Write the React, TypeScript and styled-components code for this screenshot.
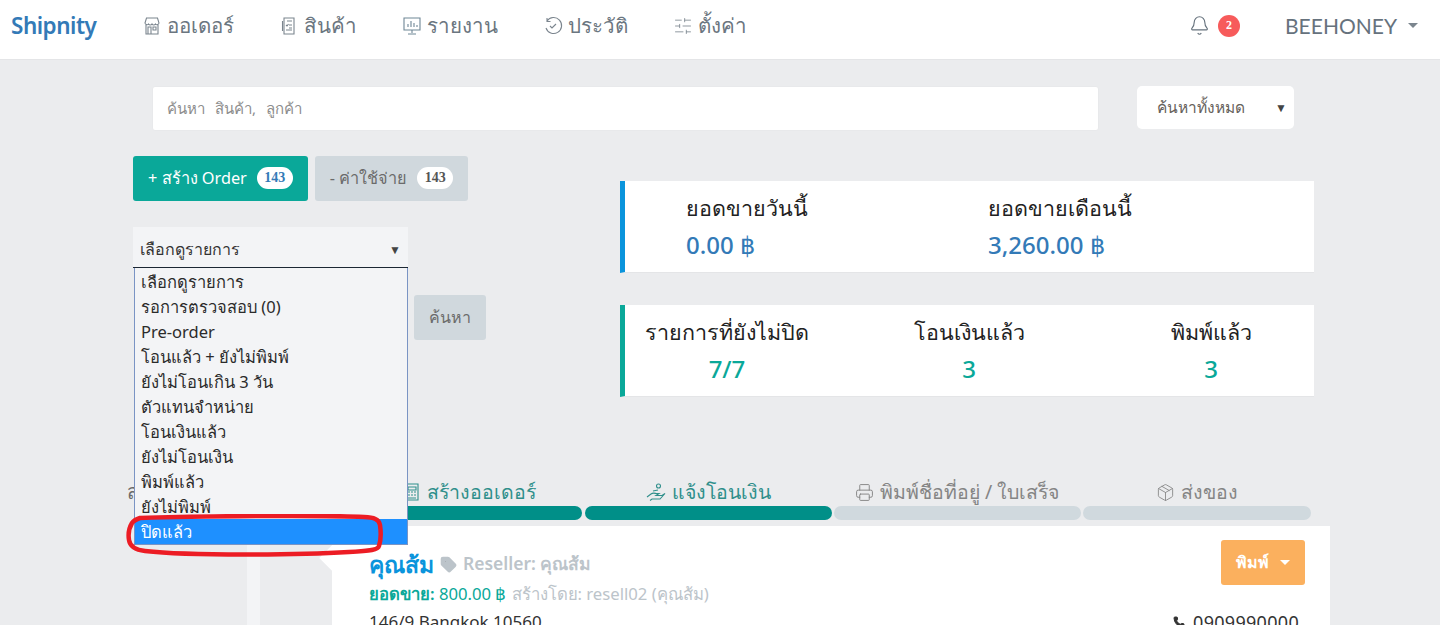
import styled, { createGlobalStyle } from "styled-components";
import { Bell, Package, Phone, Printer, SlidersHorizontal, Tag } from "lucide-react";

const GlobalStyle = createGlobalStyle`
  html, body {
    margin: 0;
    padding: 0;
    background: #ebecee;
    overflow: hidden;
  }
  * { box-sizing: border-box; }
  body { font-family: "Noto Sans", "Liberation Sans", sans-serif; }
`;

const Page = styled.div`
  width: 1440px;
  height: 625px;
  overflow: hidden;
  display: flex;
  flex-direction: column;
`;

const Navbar = styled.nav`
  height: 60px;
  flex: none;
  background: #fff;
  border-bottom: 1px solid #e4e5e7;
  display: flex;
  align-items: center;
  padding: 0 22px 8px 11px;
`;

const Brand = styled.div`
  font-size: 22.5px;
  font-weight: 600;
  letter-spacing: -0.5px;
  color: #337ab7;
  width: 131px;
`;

const NavMenu = styled.div`
  display: flex;
  gap: 45px;
  flex: 1;
`;

const NavItem = styled.div`
  display: flex;
  align-items: center;
  gap: 5px;
  font-size: 20.5px;
  color: #6b7680;
`;

const NavRight = styled.div`
  display: flex;
  align-items: center;
  color: #66727d;
`;

const Badge = styled.span`
  width: 22px;
  height: 22px;
  border-radius: 50%;
  background: #f75b5b;
  color: #fff;
  font: bold 12px "Liberation Serif", serif;
  display: flex;
  align-items: center;
  justify-content: center;
  margin: 0 45px 0 8px;
`;

const UserName = styled.span`
  font-size: 21px;
  font-family: "Lato", sans-serif;
`;

const Caret = styled.span<{ $color?: string }>`
  width: 0;
  height: 0;
  border-left: 5px solid transparent;
  border-right: 5px solid transparent;
  border-top: 5px solid ${(p) => p.$color ?? "#7b858e"};
  margin-left: 11px;
`;

const Main = styled.main`
  flex: 1;
  padding-top: 26px;
  display: flex;
  flex-direction: column;
`;

const SearchRow = styled.div`
  display: flex;
  gap: 38px;
  padding-left: 152px;
`;

const SearchBox = styled.div`
  width: 947px;
  height: 45px;
  background: #fff;
  border-radius: 3px;
  border: 1px solid #e8e9eb;
  padding: 0 14px;
  display: flex;
  align-items: center;
  font-size: 15px;
  color: #8d8d8d;
  word-spacing: 6px;
`;

const ScopeSelect = styled.div`
  width: 157px;
  height: 43px;
  background: #fff;
  border-radius: 5px;
  display: flex;
  align-items: center;
  justify-content: space-between;
  padding: 0 7px 0 20px;
  font-size: 15.5px;
  color: #66615b;
`;

const SmallArrow = styled.span`
  font-size: 12px;
  color: #444;
`;

const Columns = styled.div`
  display: grid;
  grid-template-columns: 487px 694px;
  padding: 25px 0 0 133px;
`;

const LeftColumn = styled.div`
  position: relative;
`;

const ActionRow = styled.div`
  display: flex;
  gap: 7px;
`;

const ActionButton = styled.div<{ $primary?: boolean }>`
  height: 45px;
  border-radius: 3px;
  padding: 0 15px 2px;
  display: flex;
  align-items: center;
  gap: 10px;
  font-size: 16.3px;
  background: ${(p) => (p.$primary ? "#0aa899" : "#d0d8dd")};
  color: ${(p) => (p.$primary ? "#fff" : "#6b6b6b")};
`;

const Count = styled.span<{ $primary?: boolean }>`
  width: 36px;
  height: 22px;
  background: #fff;
  border-radius: 11px;
  display: flex;
  align-items: center;
  justify-content: center;
  font: bold 14px "Liberation Serif", serif;
  color: ${(p) => (p.$primary ? "#337ab7" : "#555")};
`;

const FilterClosed = styled.div`
  width: 275px;
  height: 41px;
  margin-top: 26px;
  background: #f3f4f6;
  border-bottom: 1px solid #1c2733;
  display: flex;
  align-items: center;
  justify-content: space-between;
  padding: 5px 7px 0 7px;
  font-size: 16px;
  color: #333;
`;

const FilterList = styled.ul`
  position: absolute;
  z-index: 3;
  top: 112px;
  left: 1px;
  width: 274px;
  margin: 0;
  padding: 1px 0 0;
  list-style: none;
  background: #f3f4f6;
  border: 1px solid #7a94c4;
  border-top: none;
`;

const FilterOption = styled.li<{ $selected?: boolean }>`
  height: 25px;
  line-height: 25px;
  padding-left: 6px;
  font-size: 16.5px;
  color: ${(p) => (p.$selected ? "#fff" : "#2b2b2b")};
  background: ${(p) => (p.$selected ? "#1e90ff" : "transparent")};
`;

const SearchButton = styled.div`
  position: absolute;
  left: 281px;
  top: 139px;
  width: 72px;
  height: 45px;
  border-radius: 3px;
  background: #d0d8dd;
  color: #6b6b6b;
  font-size: 16px;
  display: flex;
  align-items: center;
  justify-content: center;
`;

const Highlight = styled.svg`
  position: absolute;
  z-index: 4;
  left: -7px;
  top: 358px;
`;

const RightColumn = styled.div`
  display: flex;
  flex-direction: column;
  gap: 32px;
  padding-top: 25px;
`;

const StatCard = styled.section<{ $accent: string; $columns: string; $inset?: number }>`
  height: 92px;
  background: #fff;
  border-left: 5px solid ${(p) => p.$accent};
  border-bottom: 1px solid #e4e5e7;
  padding-left: ${(p) => p.$inset ?? 0}px;
  display: grid;
  grid-template-columns: ${(p) => p.$columns};
  align-items: center;
`;

const Stat = styled.div<{ $center?: boolean }>`
  display: flex;
  flex-direction: column;
  gap: 11px;
  align-items: ${(p) => (p.$center ? "center" : "flex-start")};
`;

const StatLabel = styled.div`
  font-size: 21.5px;
  font-weight: 500;
  color: #222;
  line-height: 26px;
  white-space: nowrap;
`;

const StatValue = styled.div<{ $color: string }>`
  font-size: 24px;
  font-weight: 500;
  line-height: 26px;
  color: ${(p) => p.$color};
`;

const Steps = styled.div`
  position: relative;
  display: grid;
  grid-template-columns: 248px 247px 246.5px 228px;
  column-gap: 2.5px;
  margin: 75px 0 0 334px;
`;

const HiddenHeading = styled.div`
  position: absolute;
  left: -207px;
  top: 4px;
  font-size: 20px;
  color: #6b6b6b;
`;

const StepLabel = styled.div<{ $done?: boolean; $shift?: number }>`
  height: 34px;
  padding: 6px 0 0 ${(p) => p.$shift ?? 0}px;
  display: flex;
  align-items: center;
  justify-content: center;
  gap: 6px;
  font-size: 19.5px;
  color: ${(p) => (p.$done ? "#2f8f8b" : "#858585")};
`;

const StepBar = styled.div<{ $done?: boolean }>`
  height: 14px;
  border-radius: 7px;
  background: ${(p) => (p.$done ? "#008f88" : "#d0d9de")};
`;

const OrderArea = styled.div`
  display: flex;
  flex: 1;
  margin-top: 6px;
  padding-left: 247px;
`;

const SideStripe = styled.div`
  width: 13px;
  background: #f3f4f6;
  margin-top: 19px;
`;

const SideGap = styled.div`
  width: 72px;
`;

const OrderCard = styled.article`
  position: relative;
  width: 998px;
  background: #fff;
  padding: 14px 25px 0 37px;

  &::before {
    content: "";
    position: absolute;
    left: -9px;
    top: 23px;
    width: 18px;
    height: 18px;
    background: #fff;
    transform: rotate(45deg);
  }
`;

const OrderHeader = styled.div`
  display: flex;
  justify-content: space-between;
  align-items: flex-start;
`;

const CustomerLine = styled.div`
  display: flex;
  align-items: center;
  gap: 6px;
  padding-top: 9px;
`;

const CustomerName = styled.span`
  font-size: 23px;
  font-weight: 600;
  line-height: 30px;
  color: #0a94dc;
`;

const ResellerName = styled.span`
  font-size: 17.5px;
  font-weight: 600;
  color: #bcc4ca;
`;

const SaleLine = styled.div`
  font-size: 16.7px;
  color: #0aa899;
  white-space: nowrap;
  margin-top: 2px;
`;

const SaleLabel = styled.b`
  font-weight: 600;
`;

const CreatedBy = styled.span`
  color: #bcc4ca;
  margin-left: 5px;
`;

const PrintButton = styled.div`
  width: 84px;
  height: 45px;
  border-radius: 3px;
  background: #fbb05e;
  color: #fff;
  font-size: 16px;
  font-weight: 600;
  display: flex;
  align-items: center;
  justify-content: center;
`;

const AddressRow = styled.div`
  display: flex;
  justify-content: space-between;
  font-size: 17px;
  line-height: 24px;
  color: #333;
  margin-top: 3px;
  padding-right: 6px;
`;

const PhoneText = styled.span`
  display: flex;
  align-items: center;
  gap: 8px;
  font-size: 18px;
  letter-spacing: 0.3px;
`;

const navItems = ["ออเดอร์", "สินค้า", "รายงาน", "ประวัติ", "ตั้งค่า"];

const NavIcon = ({ index }: { index: number }) => (
  <svg width="20" height="20" viewBox="0 0 20 20" fill="none" stroke="#7b858e" strokeWidth="1.1">
    {index === 0 && (
      <path d="M3 7l1.500-5h11L17 7a2 2 0 0 1-3.500 1 2 2 0 0 1-3.500 0 2 2 0 0 1-3.500 0A2 2 0 0 1 3 7zM4 9v9h12V9M6 11h3v7H6zM11 11h3v3h-3z" />
    )}
    {index === 1 && (
      <path d="M5 2h10v16H5zM3.500 5v10M8 5h5M10 9h3M10 12h3M7 9l1 1 1.500-2M7 14h6" />
    )}
    {index === 2 && (
      <path d="M2 2h16v12H2zM10 14v3M6 18h8M6 11V8M9 11V5M12 11V7M15 11V9" stroke="#6f8796" />
    )}
    {index === 3 && <path d="M4 5a8 8 0 1 1-1 7M4 2v3.500h3.500M7 10l2 2 4-4" />}
  </svg>
);

const filterOptions = [
  "เลือกดูรายการ",
  "รอการตรวจสอบ (0)",
  "Pre-order",
  "โอนแล้ว + ยังไม่พิมพ์",
  "ยังไม่โอนเกิน 3 วัน",
  "ตัวแทนจำหน่าย",
  "โอนเงินแล้ว",
  "ยังไม่โอนเงิน",
  "พิมพ์แล้ว",
  "ยังไม่พิมพ์",
  "ปิดแล้ว",
];

const ReceiptIcon = () => (
  <svg width="18" height="20" viewBox="0 0 18 20" fill="none" stroke="#2f8f8b" strokeWidth="1.1">
    <path d="M3 2h12v16H3zM5 5h8v3H5zM5 10h2M8 10h2M11 10h2M5 13h2M8 13h2M11 13h2M5 16h8" />
  </svg>
);

const HandIcon = () => (
  <svg width="20" height="20" viewBox="0 0 20 20" fill="none" stroke="#2f8f8b" strokeWidth="1.1">
    <circle cx="12.500" cy="4" r="2" />
    <path d="M1 15l4-3c2-1.500 3-1 5-.5h3l-3 2h6l3-2-5 5.500H6l-2 1.500M7 9l5-1" />
  </svg>
);

const App = () => (
  <Page>
    <GlobalStyle />
    <Navbar>
      <Brand>Shipnity</Brand>
      <NavMenu>
        {navItems.map((item, i) => (
          <NavItem key={item}>
            {i < 4 ? <NavIcon index={i} /> : <SlidersHorizontal size={20} strokeWidth={1} color="#7b858e" />}
            {item}
          </NavItem>
        ))}
      </NavMenu>
      <NavRight>
        <Bell size={21} strokeWidth={1.3} />
        <Badge>2</Badge>
        <UserName>BEEHONEY</UserName>
        <Caret />
      </NavRight>
    </Navbar>
    <Main>
      <SearchRow>
        <SearchBox>ค้นหา สินค้า, ลูกค้า</SearchBox>
        <ScopeSelect>
          ค้นหาทั้งหมด
          <SmallArrow>▼</SmallArrow>
        </ScopeSelect>
      </SearchRow>
      <Columns>
        <LeftColumn>
          <ActionRow>
            <ActionButton $primary>
              + สร้าง Order <Count $primary>143</Count>
            </ActionButton>
            <ActionButton>
              - ค่าใช้จ่าย <Count>143</Count>
            </ActionButton>
          </ActionRow>
          <FilterClosed>
            เลือกดูรายการ
            <SmallArrow>▼</SmallArrow>
          </FilterClosed>
          <FilterList>
            {filterOptions.map((option) => (
              <FilterOption key={option} $selected={option === "ปิดแล้ว"}>
                {option}
              </FilterOption>
            ))}
          </FilterList>
          <SearchButton>ค้นหา</SearchButton>
          <Highlight width="260" height="44" viewBox="0 0 260 44" fill="none">
            <path
              d="M14 4C70 2 200 1 238 3c10 .5 15 2 16 8 1 7 1 15-1 21-1 4-8 5-30 6-50 3-160 4-204-1-9-1-15-4-16-11-1-6 0-12 3-17 2-3 5-4 8-5z"
              stroke="#ec1c24"
              strokeWidth="4.500"
            />
          </Highlight>
        </LeftColumn>
        <RightColumn>
          <StatCard $accent="#0a94dc" $columns="302px 1fr" $inset={61}>
            <Stat>
              <StatLabel>ยอดขายวันนี้</StatLabel>
              <StatValue $color="#337ab7">0.00 ฿</StatValue>
            </Stat>
            <Stat>
              <StatLabel>ยอดขายเดือนนี้</StatLabel>
              <StatValue $color="#337ab7">3,260.00 ฿</StatValue>
            </Stat>
          </StatCard>
          <StatCard $accent="#0aa899" $columns="204px 280px 204px">
            {[
              ["รายการที่ยังไม่ปิด", "7/7"],
              ["โอนเงินแล้ว", "3"],
              ["พิมพ์แล้ว", "3"],
            ].map(([label, value]) => (
              <Stat $center key={label}>
                <StatLabel>{label}</StatLabel>
                <StatValue $color="#0aa899">{value}</StatValue>
              </Stat>
            ))}
          </StatCard>
        </RightColumn>
      </Columns>
      <Steps>
        <HiddenHeading>ส</HiddenHeading>
        <StepLabel $done $shift={22}>
          <ReceiptIcon />
          สร้างออเดอร์
        </StepLabel>
        <StepLabel $done>
          <HandIcon />
          แจ้งโอนเงิน
        </StepLabel>
        <StepLabel>
          <Printer size={19} strokeWidth={1.2} />
          พิมพ์ชื่อที่อยู่ / ใบเสร็จ
        </StepLabel>
        <StepLabel>
          <Package size={19} strokeWidth={1.1} />
          ส่งของ
        </StepLabel>
        <StepBar $done />
        <StepBar $done />
        <StepBar />
        <StepBar />
      </Steps>
      <OrderArea>
        <SideStripe />
        <SideGap />
        <OrderCard>
          <OrderHeader>
            <div>
              <CustomerLine>
                <CustomerName>คุณส้ม</CustomerName>
                <Tag size={17} color="#bcc4ca" fill="#bcc4ca" />
                <ResellerName>Reseller: คุณส้ม</ResellerName>
              </CustomerLine>
              <SaleLine>
                <SaleLabel>ยอดขาย:</SaleLabel> 800.00 ฿<CreatedBy>สร้างโดย: resell02 (คุณส้ม)</CreatedBy>
              </SaleLine>
            </div>
            <PrintButton>
              พิมพ์
              <Caret $color="#fff" />
            </PrintButton>
          </OrderHeader>
          <AddressRow>
            <span>146/9 Bangkok 10560</span>
            <PhoneText>
              <Phone size={12} fill="#333" />
              0909990000
            </PhoneText>
          </AddressRow>
        </OrderCard>
      </OrderArea>
    </Main>
  </Page>
);

export default App;
